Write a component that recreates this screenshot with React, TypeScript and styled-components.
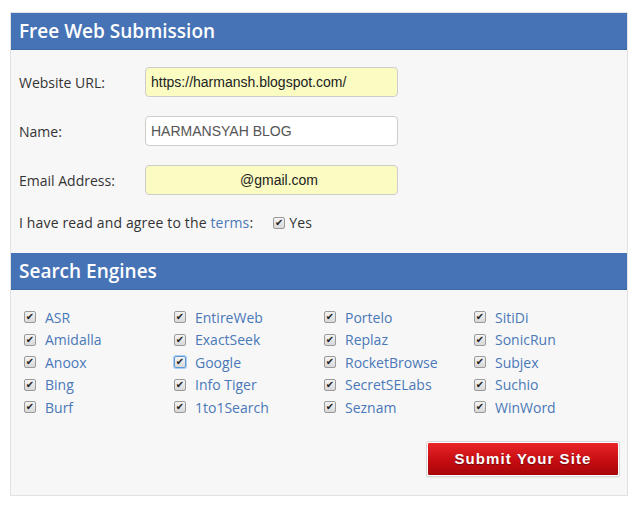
import styled, { createGlobalStyle } from "styled-components";

const GlobalStyle = createGlobalStyle`
  body {
    margin: 0;
    background: #ffffff;
    font-family: "Open Sans", "Liberation Sans", sans-serif;
  }
`;

const Panel = styled.div`
  margin: 12px 0 0 10px;
  width: 616px;
  border: 1px solid #e2e2e2;
  background: #f7f7f7;
  padding-bottom: 19px;
`;

const Header = styled.h2`
  margin: 0;
  height: 36px;
  line-height: 36px;
  padding-left: 8px;
  background: #4673b6;
  border-bottom: 1px solid #3d68a8;
  color: #ffffff;
  font-family: "Open Sans", "Liberation Sans", sans-serif;
  font-size: 19px;
  font-weight: 600;
`;

const Form = styled.div`
  padding: 17px 0 21px 8px;
  display: flex;
  flex-direction: column;
  gap: 19px;
`;

const Row = styled.div`
  display: grid;
  grid-template-columns: 126px 253px;
  align-items: center;
`;

const Label = styled.label`
  font-size: 14px;
  color: #333;
`;

const Field = styled.input<{ $yellow?: boolean; $indent?: number }>`
  box-sizing: border-box;
  height: 30px;
  width: 253px;
  border: 1px solid #d0cccc;
  border-radius: 4px;
  background: ${(p) => (p.$yellow ? "#fafcc2" : "#ffffff")};
  font-family: "Liberation Sans", Arial, sans-serif;
  font-size: 14px;
  color: ${(p) => (p.$yellow ? "#222" : "#555")};
  padding: 0 0 0 5px;
  text-indent: ${(p) => p.$indent ?? 0}px;
  outline: none;
`;

const TermsRow = styled.div`
  display: flex;
  align-items: center;
  font-size: 14px;
  color: #333;
  margin-top: -1px;
  letter-spacing: 0.15px;
`;

const Link = styled.a`
  color: #4a78b8;
  text-decoration: none;
`;

const Check = styled.span<{ $focus?: boolean }>`
  box-sizing: border-box;
  display: inline-flex;
  align-items: center;
  justify-content: center;
  width: 12px;
  height: 12px;
  border: 1px solid ${(p) => (p.$focus ? "#5b9ad6" : "#9a9a9a")};
  box-shadow: ${(p) => (p.$focus ? "0 0 0 1px #a9cdf0" : "none")};
  border-radius: 2px;
  background: linear-gradient(#f4f4f4, #d8d8d8);
  font-size: 10px;
  line-height: 1;
  color: #222;
  font-family: "DejaVu Sans", sans-serif;
  letter-spacing: 0;
`;

const Yes = styled.span`
  margin-left: 4px;
`;

const TermsCheck = styled.span`
  display: inline-flex;
  align-items: center;
  margin-left: 20px;
`;

const EngineGrid = styled.div`
  display: grid;
  grid-template-columns: repeat(4, 150px);
  grid-auto-flow: column;
  grid-template-rows: repeat(5, 22.5px);
  padding: 16px 0 0 13px;
`;

const Engine = styled.label`
  display: flex;
  align-items: center;
  gap: 9px;
  font-size: 14px;
`;

const Footer = styled.div`
  display: flex;
  justify-content: flex-end;
  padding: 23px 8px 0 0;
`;

const SubmitButton = styled.button`
  width: 192px;
  height: 34px;
  border: 1px solid #ffffff;
  border-radius: 2px;
  box-shadow: 0 0 0 1px #d8d8d8, 0 1px 2px rgba(0, 0, 0, 0.2);
  background: linear-gradient(#ea2528, #c20b10 60%, #a8060a);
  color: #ffffff;
  font-family: "Liberation Sans", Arial, sans-serif;
  font-size: 15px;
  font-weight: bold;
  letter-spacing: 1.1px;
  text-shadow: 0 1px 1px rgba(0, 0, 0, 0.4);
  cursor: pointer;
`;

const engines = [
  "ASR", "Amidalla", "Anoox", "Bing", "Burf",
  "EntireWeb", "ExactSeek", "Google", "Info Tiger", "1to1Search",
  "Portelo", "Replaz", "RocketBrowse", "SecretSELabs", "Seznam",
  "SitiDi", "SonicRun", "Subjex", "Suchio", "WinWord",
];

export default function App() {
  return (
    <>
      <GlobalStyle />
      <Panel>
        <Header>Free Web Submission</Header>
        <Form>
          <Row>
            <Label>Website URL:</Label>
            <Field $yellow readOnly value="https://harmansh.blogspot.com/" />
          </Row>
          <Row>
            <Label>Name:</Label>
            <Field readOnly value="HARMANSYAH BLOG" />
          </Row>
          <Row>
            <Label>Email Address:</Label>
            <Field $yellow $indent={89} readOnly value="@gmail.com" />
          </Row>
          <TermsRow>
            I have read and agree to the&nbsp;<Link href="#">terms</Link>:
            <TermsCheck>
              <Check>✔</Check>
              <Yes>Yes</Yes>
            </TermsCheck>
          </TermsRow>
        </Form>
        <Header>Search Engines</Header>
        <EngineGrid>
          {engines.map((name) => (
            <Engine key={name}>
              <Check $focus={name === "Google"}>✔</Check>
              <Link href="#">{name}</Link>
            </Engine>
          ))}
        </EngineGrid>
        <Footer>
          <SubmitButton>Submit Your Site</SubmitButton>
        </Footer>
      </Panel>
    </>
  );
}
